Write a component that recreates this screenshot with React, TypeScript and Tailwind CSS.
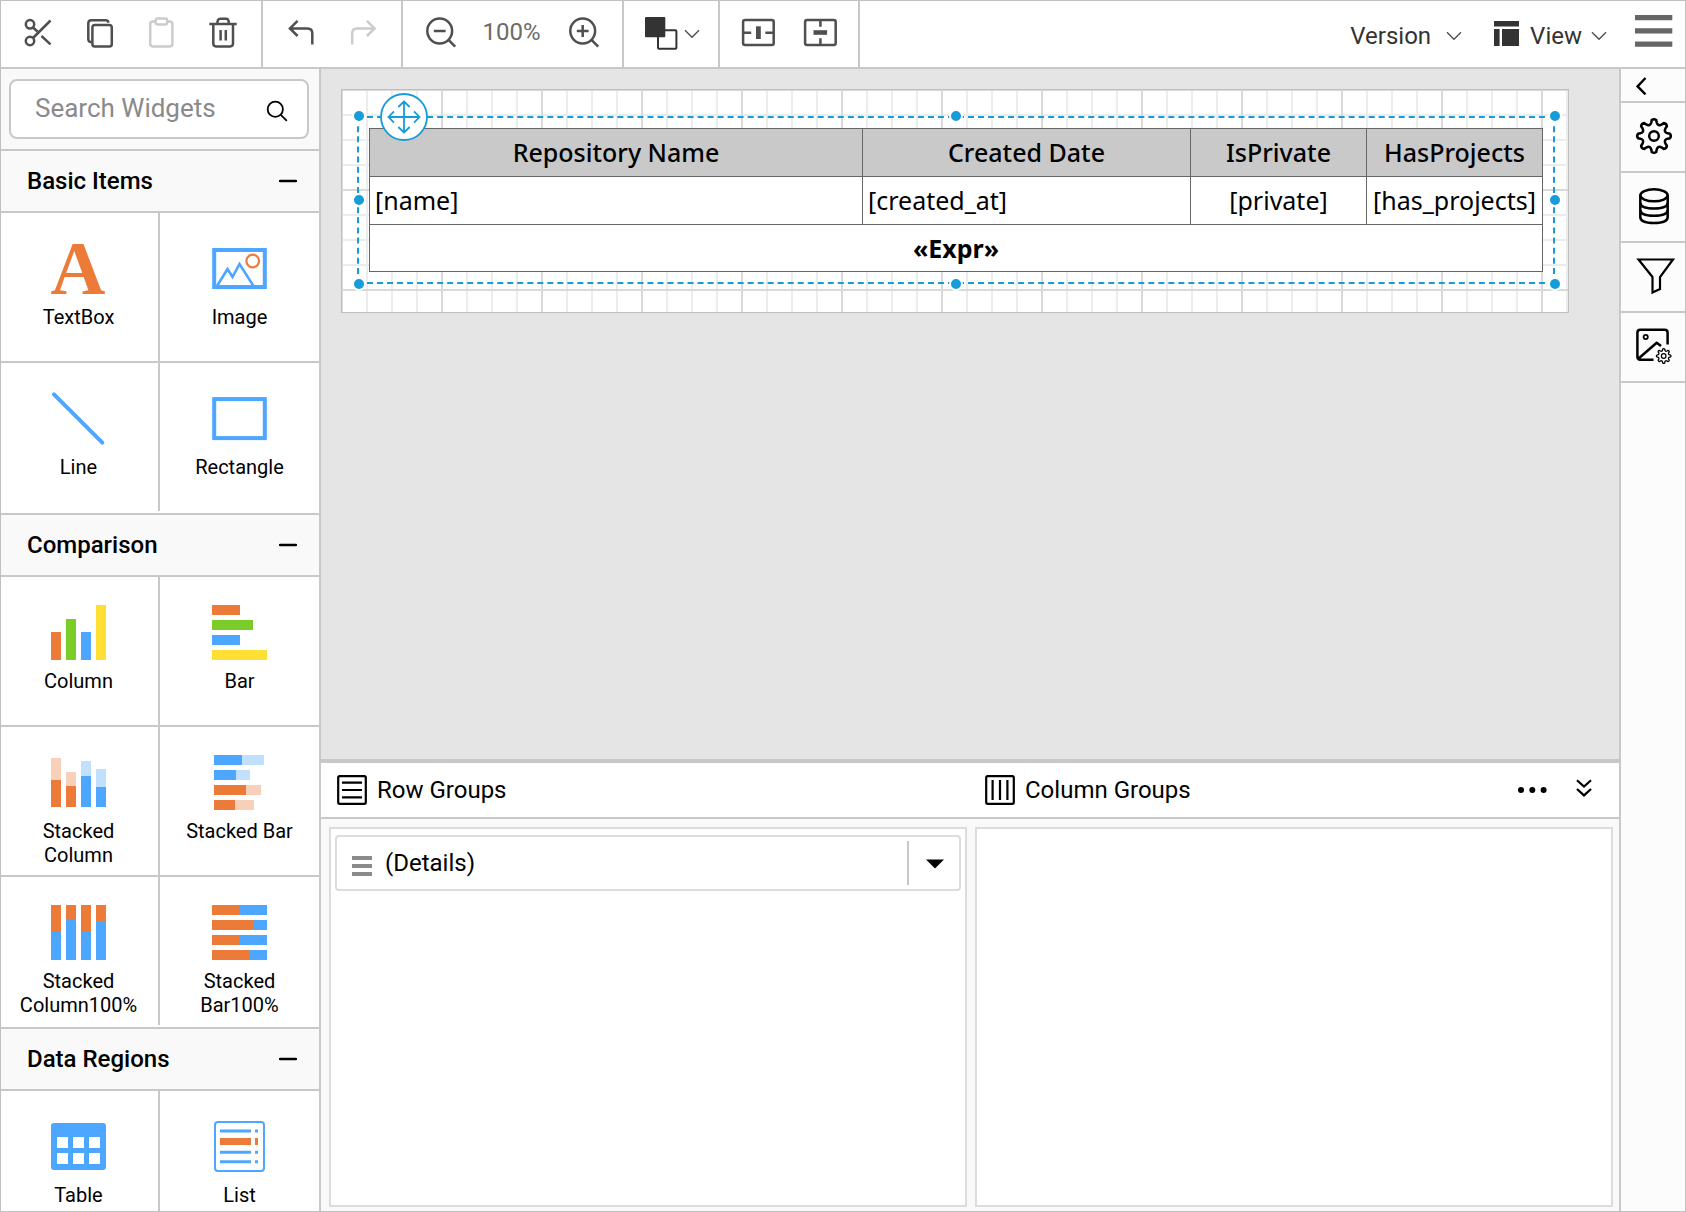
import type { ReactNode } from "react";

const BLUE = "#4da6ff";
const ORANGE = "#ec7a38";
const GREEN = "#7ccc29";
const YELLOW = "#ffdf33";
const LIGHT_BLUE = "#c1dfff";
const LIGHT_ORANGE = "#f8cfb9";

// ===== HELPERS =====

// outline of a cog with eight soft teeth
function gearPath(cx: number, cy: number, r: number) {
  const at = (deg: number, radius: number) => {
    const a = (deg * Math.PI) / 180;
    return `${(cx + Math.sin(a) * radius).toFixed(2)} ${(cy - Math.cos(a) * radius).toFixed(2)}`;
  };
  let d = "";
  for (let i = 0; i < 8; i++) {
    const t = i * 45;
    d += `${i === 0 ? "M" : "L"}${at(t - 11, r * 0.82)} L${at(t - 8, r * 0.95)} Q${at(t, r * 1.04)} ${at(t + 8, r * 0.95)} L${at(t + 11, r * 0.82)} Q${at(t + 22.5, r * 0.6)} ${at(t + 34, r * 0.82)} `;
  }
  return d + "Z";
}

function ToolIcon({ children, muted }: { children: ReactNode; muted?: boolean }) {
  return (
    <svg
      viewBox="0 0 32 32"
      className={muted ? "size-8 overflow-visible text-[#cccccc]" : "size-8 overflow-visible text-[#4f4f4f]"}
      fill="none"
      stroke="currentColor"
      strokeWidth="2.5"
      aria-hidden="true"
    >
      {children}
    </svg>
  );
}

function ToolButton({ label, muted, children }: { label: string; muted?: boolean; children: ReactNode }) {
  return (
    <button type="button" aria-label={label} disabled={muted} className="flex h-full w-[62px] items-center justify-center">
      <ToolIcon muted={muted}>{children}</ToolIcon>
    </button>
  );
}

function ChevronDown() {
  return (
    <svg viewBox="0 0 16 10" className="h-2.5 w-4" fill="none" stroke="#4f4f4f" strokeWidth="1.4" aria-hidden="true">
      <path d="M1 1.2 8 8.2 15 1.2" />
    </svg>
  );
}

// ===== TOOLBAR =====

function Toolbar() {
  return (
    <header className="flex h-[68px] shrink-0 border-b-2 border-[#c8c8c8] bg-white">
      <div className="flex border-r-2 border-[#c8c8c8] px-1.5">
        <ToolButton label="Cut">
          <circle cx="8" cy="6.3" r="4.2" />
          <circle cx="8" cy="23" r="4.2" />
          <path d="M11 20 28.5 2.5M11 9.5l4.5 4M19.5 18l9 8.3" />
        </ToolButton>
        <ToolButton label="Copy">
          <rect x="8.4" y="6.9" width="19.4" height="21.6" rx="2.6" />
          <path d="M7.5 24.3Q4.3 24 4.3 21V5.3Q4.3 2.3 7.3 2.3H21.5Q24 2.3 24.6 4.6" />
        </ToolButton>
        <ToolButton label="Paste" muted>
          <rect x="4.2" y="3.4" width="22.2" height="25" rx="2.6" />
          <rect x="9.6" y="0.6" width="11.6" height="5.8" rx="1.8" fill="#fff" />
        </ToolButton>
        <ToolButton label="Delete">
          <path d="M1.3 6H28.7M5.3 6V25.6Q5.3 28.4 8 28.4H22.2Q25 28.4 25 25.6V6M9.4 5.5Q9.4 .8 12 .8H18.2Q20.8.8 20.8 5.5M12.6 12V22.5M17.8 12V22.5" />
        </ToolButton>
      </div>
      <div className="flex border-r-2 border-[#c8c8c8] px-[7px]">
        <ToolButton label="Undo">
          <path d="M12.6 2.8 4.9 10.4 12.6 18M5 10.4H22.5Q27.3 10.4 27.3 15.2V26.5" />
        </ToolButton>
        <ToolButton label="Redo" muted>
          <path d="M19.9 2.8 27.6 10.4 19.9 18M27.5 10.4H10Q5.2 10.4 5.2 15.2V26.5" />
        </ToolButton>
      </div>
      <div className="flex items-center border-r-2 border-[#c8c8c8] px-[7px]">
        <ToolButton label="Zoom out">
          <circle cx="14.7" cy="13" r="12.4" />
          <path d="M23.5 21.8 30.2 28.6M8.8 13H20.6" />
        </ToolButton>
        <span className="w-[81px] pr-0.5 pb-1 text-center text-2xl text-[#6b6b6b]">100%</span>
        <ToolButton label="Zoom in">
          <circle cx="14.7" cy="13" r="12.4" />
          <path d="M23.5 21.8 30.2 28.6M8.8 13H20.6M14.7 7.1V18.9" />
        </ToolButton>
      </div>
      <div className="flex border-r-2 border-[#c8c8c8]">
        <button type="button" aria-label="Order" className="flex w-[94px] items-center gap-[7px] pl-[21px]">
          <svg viewBox="0 0 32 32" className="size-8 overflow-visible" fill="none" stroke="#333" strokeWidth="2" aria-hidden="true">
            <rect x="13" y="12.2" width="18.4" height="18.6" rx="1" />
            <rect x="0" y="-1" width="20.3" height="20.3" rx="1" fill="#333" stroke="none" />
          </svg>
          <ChevronDown />
        </button>
      </div>
      <div className="flex border-r-2 border-[#c8c8c8] px-[7px]">
        <ToolButton label="Fit column">
          <rect x="1.1" y="2.1" width="30.6" height="24.8" rx="2" />
          <path d="M1 14.7H9.2M23.4 14.7H31" />
          <rect x="14" y="8.3" width="4.8" height="12.7" fill="currentColor" stroke="none" />
        </ToolButton>
        <ToolButton label="Fit row">
          <rect x="1.1" y="2.1" width="30.6" height="24.8" rx="2" />
          <path d="M16.4 2V8.8M16.4 20.2V27" />
          <rect x="9.5" y="12.2" width="13.6" height="4.6" fill="currentColor" stroke="none" />
        </ToolButton>
      </div>
      <div className="ml-auto flex items-center pr-3 text-2xl text-[#333333]">
        <button type="button" className="flex items-center gap-[15px] pt-1">
          Version
          <ChevronDown />
        </button>
        <button type="button" className="ml-8 flex items-center pt-1">
          <svg viewBox="0 0 26 26" className="mr-2.5 mb-1 size-[26px]" fill="#333" aria-hidden="true">
            <path d="M0 0H25V5.4H0zM0 8H5.6V25H0zM8 8H25V25H8z" />
          </svg>
          View
          <span className="ml-[9px]">
            <ChevronDown />
          </span>
        </button>
        <button type="button" aria-label="Menu" className="ml-7 pb-1.5">
          <svg viewBox="0 0 38 32" className="h-8 w-[38px]" fill="#666" aria-hidden="true">
            <path d="M0 0H37.3V5.2H0zM0 13.2H37.3V18.6H0zM0 26.4H37.3V31.8H0z" />
          </svg>
        </button>
      </div>
    </header>
  );
}

// ===== WIDGET SIDEBAR =====

const slots = [0, 15, 30, 45];

function StackedColumns({ bars }: { bars: { top: number; split: number; bottom: number; upper: string; lower: string }[] }) {
  return (
    <>
      {bars.map((b, i) => (
        <g key={i}>
          <rect x={slots[i]} y={b.top} width="10" height={b.split - b.top} fill={b.upper} />
          <rect x={slots[i]} y={b.split} width="10" height={b.bottom - b.split} fill={b.lower} />
        </g>
      ))}
    </>
  );
}

function StackedBars({ bars }: { bars: { from: number; split: number; to: number; first: string; second: string }[] }) {
  return (
    <>
      {bars.map((b, i) => (
        <g key={i}>
          <rect x={b.from} y={slots[i]} width={b.split - b.from} height="10" fill={b.first} />
          <rect x={b.split} y={slots[i]} width={b.to - b.split} height="10" fill={b.second} />
        </g>
      ))}
    </>
  );
}

type Widget = { name: string; icon: ReactNode };

const sections: { title: string; widgets: Widget[] }[] = [
  {
    title: "Basic Items",
    widgets: [
      {
        name: "TextBox",
        icon: (
          <text x="27" y="53" textAnchor="middle" fill={ORANGE} className="font-['Liberation_Serif',serif] text-[76px] font-bold">
            A
          </text>
        ),
      },
      {
        name: "Image",
        icon: (
          <g fill="none" stroke={BLUE}>
            <rect x="2.2" y="9" width="50.6" height="37" strokeWidth="4" />
            <path d="M5 45 15.5 28 20.5 36 27.5 23 41.5 45" strokeWidth="2.6" />
            <circle cx="40.7" cy="20" r="6.3" stroke={ORANGE} strokeWidth="2.2" />
          </g>
        ),
      },
      { name: "Line", icon: <path d="M3 3.3 51.3 51.7" stroke={BLUE} strokeWidth="4" strokeLinecap="round" /> },
      { name: "Rectangle", icon: <rect x="2.2" y="8.1" width="50.6" height="39" fill="none" stroke={BLUE} strokeWidth="4" /> },
    ],
  },
  {
    title: "Comparison",
    widgets: [
      {
        name: "Column",
        icon: (
          <>
            <path d="M0 27h10v28H0z" fill={ORANGE} />
            <path d="M15 14h10v41H15z" fill={GREEN} />
            <path d="M30 27h10v28H30z" fill={BLUE} />
            <path d="M45 0h10v55H45z" fill={YELLOW} />
          </>
        ),
      },
      {
        name: "Bar",
        icon: (
          <>
            <path d="M0 0h28v10H0z" fill={ORANGE} />
            <path d="M0 15h41v10H0z" fill={GREEN} />
            <path d="M0 30h28v10H0z" fill={BLUE} />
            <path d="M0 45h55v10H0z" fill={YELLOW} />
          </>
        ),
      },
      {
        name: "Stacked Column",
        icon: (
          <StackedColumns
            bars={[
              { top: 3, split: 25, bottom: 52, upper: LIGHT_ORANGE, lower: ORANGE },
              { top: 17, split: 31, bottom: 52, upper: LIGHT_ORANGE, lower: ORANGE },
              { top: 6, split: 21, bottom: 52, upper: LIGHT_BLUE, lower: BLUE },
              { top: 14, split: 32, bottom: 52, upper: LIGHT_BLUE, lower: BLUE },
            ]}
          />
        ),
      },
      {
        name: "Stacked Bar",
        icon: (
          <StackedBars
            bars={[
              { from: 2, split: 30, to: 52, first: BLUE, second: LIGHT_BLUE },
              { from: 2, split: 24, to: 38, first: BLUE, second: LIGHT_BLUE },
              { from: 2, split: 34, to: 49, first: ORANGE, second: LIGHT_ORANGE },
              { from: 2, split: 23, to: 42, first: ORANGE, second: LIGHT_ORANGE },
            ]}
          />
        ),
      },
      {
        name: "Stacked Column100%",
        icon: (
          <StackedColumns
            bars={[27, 14, 27, 17].map((split) => ({ top: 0, split, bottom: 55, upper: ORANGE, lower: BLUE }))}
          />
        ),
      },
      {
        name: "Stacked Bar100%",
        icon: (
          <StackedBars
            bars={[28, 41, 28, 38].map((split) => ({ from: 0, split, to: 55, first: ORANGE, second: BLUE }))}
          />
        ),
      },
    ],
  },
  {
    title: "Data Regions",
    widgets: [
      {
        name: "Table",
        icon: (
          <>
            <rect x="0" y="4" width="55" height="47" rx="3" fill={BLUE} />
            <path d="M6 18h11v11H6zM22 18h11v11H22zM38 18h11v11H38zM6 34h11v11H6zM22 34h11v11H22zM38 34h11v11H38z" fill="#fff" />
          </>
        ),
      },
      {
        name: "List",
        icon: (
          <>
            <rect x="3" y="3" width="49" height="49" rx="3" fill="none" stroke={BLUE} strokeWidth="2" />
            <path d="M8 12h31M43 12h3M8 33.3h31M43 33.3h3M8 42.7h31M43 42.7h3" stroke={BLUE} strokeWidth="3" />
            <path d="M8 19h31v7H8zM43 19h3v7H43z" fill={ORANGE} />
          </>
        ),
      },
    ],
  },
];

function Sidebar() {
  return (
    <aside className="flex w-80 shrink-0 flex-col overflow-hidden border-r-2 border-[#c8c8c8] bg-[#f9f9f9]">
      <div className="px-2 pt-2.5 pb-2.5">
        <div className="mr-0.5 flex h-[60px] items-center rounded-lg border-2 border-[#c8c8c8] bg-white pr-[19px] pl-6">
          <input
            type="search"
            aria-label="Search Widgets"
            placeholder="Search Widgets"
            className="min-w-0 flex-1 pb-0.5 text-[26px] outline-none placeholder:text-[#8a8a8a]"
          />
          <svg viewBox="0 0 22 22" className="size-[22px] overflow-visible" fill="none" stroke="#000" strokeWidth="1.8" aria-hidden="true">
            <circle cx="9.3" cy="11.3" r="7.6" />
            <path d="M14.8 16.8 20.8 22.8" />
          </svg>
        </div>
      </div>
      {sections.map((section) => (
        <section key={section.title} className="shrink-0">
          <h2 className="border-y-2 border-[#c8c8c8]">
            <button type="button" aria-expanded="true" className="flex h-[60px] w-full items-center justify-between pr-[22px] pl-[26px] text-2xl font-medium">
              {section.title}
              <svg viewBox="0 0 18 4" className="h-1 w-[18px]" aria-hidden="true">
                <path d="M1 2H17" stroke="#000" strokeWidth="2.4" strokeLinecap="round" />
              </svg>
            </button>
          </h2>
          <ul className="grid grid-cols-2 bg-white">
            {section.widgets.map((widget, i) => (
              <li
                key={widget.name}
                className={
                  (i % 2 === 0 ? "border-r-2 border-r-[#c8c8c8] pr-0.5 " : "") +
                  (i < section.widgets.length - 2 ? "border-b-2 border-b-[#c8c8c8]" : "mb-0.5")
                }
              >
                <button type="button" className="flex h-[148px] w-full flex-col items-center px-2 pt-7 text-xl leading-6">
                  <svg viewBox="0 0 55 56" className="h-14 w-[55px] overflow-visible" aria-hidden="true">
                    {widget.icon}
                  </svg>
                  <span className="mt-2 max-w-32">{widget.name}</span>
                </button>
              </li>
            ))}
          </ul>
        </section>
      ))}
    </aside>
  );
}

// ===== REPORT CANVAS =====

function Handle({ className }: { className: string }) {
  return <span className={`absolute size-3.5 rounded-full border-2 border-white bg-[#169cd9] ${className}`} />;
}

function Canvas() {
  return (
    <main className="min-h-0 flex-1 overflow-hidden bg-[#e5e5e5] pt-5 pr-[50px] pl-5">
      <div className="relative border border-[#c0c0c0] bg-white pt-[26px] pr-[13px] pb-7 pl-[15px]">
        <svg className="absolute inset-0 size-full" aria-hidden="true">
          <defs>
            <pattern id="minor" x="-1" y="-1" width="25" height="25" patternUnits="userSpaceOnUse">
              <path d="M0 1H25M1 0V25" stroke="#ececec" strokeWidth="2" />
            </pattern>
            <pattern id="major" x="-1" y="-1" width="100" height="100" patternUnits="userSpaceOnUse">
              <path d="M0 1H100M1 0V100" stroke="#d9d9d9" strokeWidth="2" />
            </pattern>
          </defs>
          <rect width="100%" height="100%" fill="url(#minor)" />
          <rect width="100%" height="100%" fill="url(#major)" />
        </svg>
        <div className="relative border-2 border-dashed border-[#169cd9] p-2.5">
          <table className="w-full table-fixed border-collapse bg-white font-['Noto_Sans',sans-serif] text-[25px] leading-8 text-black">
            <colgroup>
              <col />
              <col className="w-[328px]" />
              <col className="w-[176px]" />
              <col className="w-[176px]" />
            </colgroup>
            <thead className="bg-[#c9c9c9]">
              <tr className="h-12">
                <th className="border border-[#666666] pb-0.5 font-medium">Repository Name</th>
                <th className="border border-[#666666] pb-0.5 font-medium">Created Date</th>
                <th className="border border-[#666666] pb-0.5 font-medium">IsPrivate</th>
                <th className="border border-[#666666] pb-0.5 font-medium">HasProjects</th>
              </tr>
            </thead>
            <tbody>
              <tr className="h-12">
                <td className="border border-[#666666] px-[5px] pb-0.5">[name]</td>
                <td className="border border-[#666666] px-[5px] pb-0.5">[created_at]</td>
                <td className="border border-[#666666] pb-0.5 text-center">[private]</td>
                <td className="border border-[#666666] pb-0.5 text-center">[has_projects]</td>
              </tr>
              <tr className="h-[47px]">
                <td colSpan={4} className="border border-[#666666] text-center font-bold">
                  «Expr»
                </td>
              </tr>
            </tbody>
          </table>
          <Handle className="-top-0.5 left-0 -translate-1/2" />
          <Handle className="-top-0.5 left-1/2 -translate-1/2" />
          <Handle className="-top-0.5 -right-0.5 translate-x-1/2 -translate-y-1/2" />
          <Handle className="top-1/2 left-0 -translate-1/2" />
          <Handle className="top-1/2 -right-0.5 translate-x-1/2 -translate-y-1/2" />
          <Handle className="-bottom-0.5 left-0 -translate-x-1/2 translate-y-1/2" />
          <Handle className="-bottom-0.5 left-1/2 -translate-x-1/2 translate-y-1/2" />
          <Handle className="-right-0.5 -bottom-0.5 translate-1/2" />
          <button type="button" aria-label="Move table" className="absolute -top-[25px] left-[21px] size-12">
            <svg viewBox="0 0 48 48" className="size-12" fill="none" stroke="#169cd9" strokeWidth="1.8" aria-hidden="true">
              <circle cx="24" cy="24" r="23" fill="#fff" />
              <path d="M8.5 24H39.5M24 8.5V39.5M14 18.3 8.5 24 14 29.7M34 18.3 39.5 24 34 29.7M18.3 14 24 8.5 29.7 14M18.3 34 24 39.5 29.7 34" />
            </svg>
          </button>
        </div>
      </div>
    </main>
  );
}

// ===== GROUPING PANEL =====

function GroupingPanel() {
  return (
    <section className="flex h-[452px] shrink-0 flex-col border-t-4 border-[#c8c8c8] bg-[#f9f9f9]">
      <div className="flex h-14 shrink-0 border-b-2 border-[#c8c8c8] bg-white pr-[26px] pl-4 text-2xl">
        <h3 className="flex w-1/2 items-center gap-2.5">
          <svg viewBox="0 0 30 30" className="size-[30px]" fill="none" stroke="#000" strokeWidth="2.2" aria-hidden="true">
            <rect x="1.2" y="1.2" width="27.6" height="27.6" rx="1.5" />
            <path d="M5 7.6H25M5 15H25M5 22.4H25" />
          </svg>
          Row Groups
        </h3>
        <h3 className="flex flex-1 items-center gap-2.5 pl-5">
          <svg viewBox="0 0 30 30" className="size-[30px]" fill="none" stroke="#000" strokeWidth="2.2" aria-hidden="true">
            <rect x="1.2" y="1.2" width="27.6" height="27.6" rx="1.5" />
            <path d="M7.6 5V25M15 5V25M22.4 5V25" />
          </svg>
          Column Groups
        </h3>
        <button type="button" aria-label="More options">
          <svg viewBox="0 0 30 8" className="h-2 w-[30px]" aria-hidden="true">
            <circle cx="4" cy="4" r="3" />
            <circle cx="15.3" cy="4" r="3" />
            <circle cx="26.6" cy="4" r="3" />
          </svg>
        </button>
        <button type="button" aria-label="Collapse panel" className="ml-7 pb-1">
          <svg viewBox="0 0 18 18" className="size-[18px]" fill="none" stroke="#000" strokeWidth="2.2" aria-hidden="true">
            <path d="M2 1.2 9 7.6 16 1.2M2 10 9 16.4 16 10" />
          </svg>
        </button>
      </div>
      <div className="grid flex-1 grid-cols-2 gap-2 pt-2 pr-1.5 pb-1 pl-2">
        <div className="border-2 border-[#dcdcdc] bg-white px-1 pt-1.5">
          <div className="flex h-14 items-center rounded-sm border-2 border-[#dcdcdc] text-2xl">
            <svg viewBox="0 0 20 20" className="mt-1.5 mr-[13px] ml-[15px] size-5" fill="#8a8a8a" aria-hidden="true">
              <path d="M0 0H20V4H0zM0 8H20V12H0zM0 16H20V20H0z" />
            </svg>
            <span className="flex-1">(Details)</span>
            <button type="button" aria-label="Details options" className="flex h-11 w-[52px] items-center border-l-2 border-[#c8c8c8] pt-0.5 pl-[17px]">
              <svg viewBox="0 0 18 10" className="h-2.5 w-[18px]" aria-hidden="true">
                <path d="M0 .5H18L9 9.5z" />
              </svg>
            </button>
          </div>
        </div>
        <div className="border-2 border-[#dcdcdc] bg-white" />
      </div>
    </section>
  );
}

// ===== PROPERTY RAIL =====

function RailButton({ label, children }: { label: string; children: ReactNode }) {
  return (
    <button type="button" aria-label={label} className="flex h-[70px] items-center justify-center border-b-2 border-[#c8c8c8]">
      <svg viewBox="0 0 40 40" className="size-10 overflow-visible" fill="none" stroke="#000" strokeWidth="2.5" strokeLinejoin="round" aria-hidden="true">
        {children}
      </svg>
    </button>
  );
}

function PropertyRail() {
  return (
    <nav className="flex w-[66px] shrink-0 flex-col border-l-2 border-[#c8c8c8] bg-[#fcfcfc]">
      <button type="button" aria-label="Expand panel" className="flex h-[34px] items-center border-b-2 border-[#c8c8c8] pt-0.5 pl-[15px]">
        <svg viewBox="0 0 12 18" className="h-[18px] w-3" fill="none" stroke="#000" strokeWidth="2.4" aria-hidden="true">
          <path d="M9.5 1 1.6 9.3 9.5 17.4" />
        </svg>
      </button>
      <RailButton label="Properties">
        <path d={gearPath(21, 19, 17)} />
        <circle cx="21" cy="19" r="4.8" />
      </RailButton>
      <RailButton label="Data">
        <ellipse cx="21" cy="8.3" rx="13.7" ry="6" />
        <path d="M7.3 8.3V30Q7.3 36 21 36T34.7 30V8.3M7.3 15.5Q7.3 21.5 21 21.5T34.7 15.5M7.3 22.8Q7.3 28.8 21 28.8T34.7 22.8" />
      </RailButton>
      <RailButton label="Filters">
        <path d="M5.5 2.5H40L27 20V32L19.5 35.5V20z" strokeWidth="2.2" strokeLinejoin="miter" />
      </RailButton>
      <RailButton label="Image settings">
        <path d="M34.6 17.5V5.7Q34.6 2.8 31.7 2.8H7.3Q4.4 2.8 4.4 5.7V29.8Q4.4 32.7 7.3 32.7H20.5M5.3 31.8 23.7 15.8 28 19" />
        <circle cx="12.7" cy="10" r="2.1" strokeWidth="1.8" />
        <path d={gearPath(30.7, 29, 7.4)} strokeWidth="1.3" />
        <circle cx="30.7" cy="29" r="2.3" strokeWidth="1.2" />
      </RailButton>
    </nav>
  );
}

export default function App() {
  return (
    <div className="flex h-screen flex-col overflow-hidden border border-[#c0c0c0] bg-white font-[Roboto,sans-serif] text-black">
      <Toolbar />
      <div className="flex min-h-0 flex-1">
        <Sidebar />
        <div className="flex min-w-0 flex-1 flex-col">
          <Canvas />
          <GroupingPanel />
        </div>
        <PropertyRail />
      </div>
    </div>
  );
}
